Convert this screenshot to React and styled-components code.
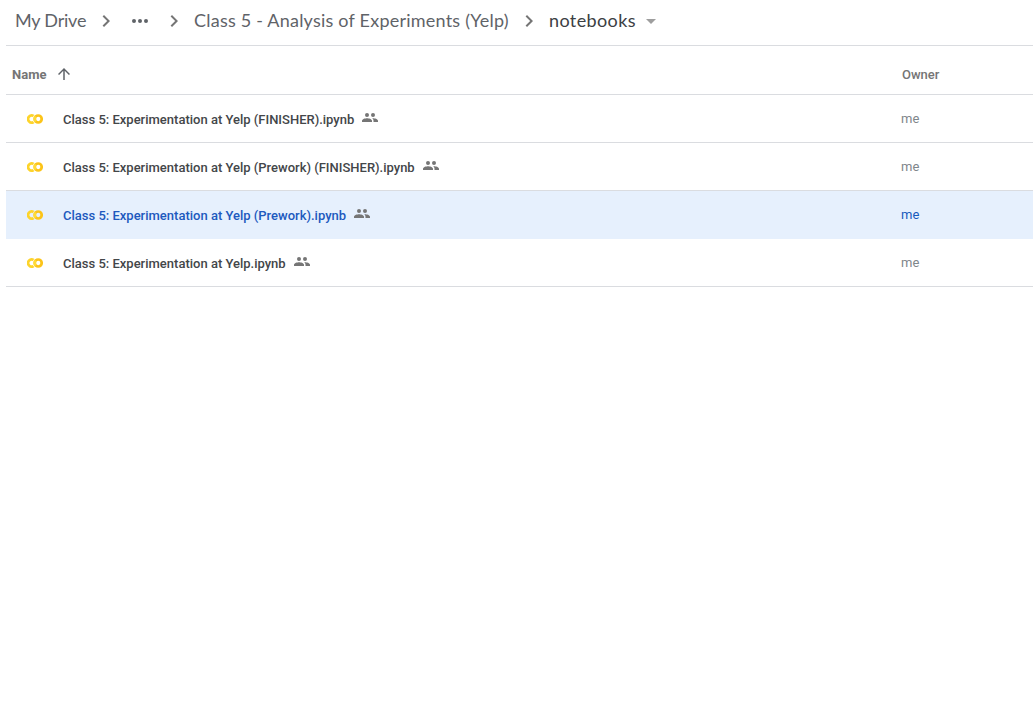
import React from "react";
import styled, { createGlobalStyle } from "styled-components";

const GlobalStyle = createGlobalStyle`
  * { box-sizing: border-box; }
  body { margin: 0; background: #fff; font-family: Roboto, "Liberation Sans", sans-serif; }
`;

const Page = styled.main`
  padding-left: 6px;
  min-height: 704px;
  overflow: hidden;
`;

const Breadcrumbs = styled.nav`
  display: flex;
  align-items: center;
  height: 46px;
  padding: 0 0 4px 9px;
  border-bottom: 1px solid #dadce0;
`;

const Crumb = styled.span`
  flex: none;
  width: ${(p) => p.$width}px;
  padding-bottom: 2px;
  color: ${(p) => (p.$current ? "#3c4043" : "#5f6368")};
  font: 400 18px/24px "Google Sans", Lato, sans-serif;
  letter-spacing: ${(p) => p.$spacing || 0}px;
  white-space: nowrap;
`;

const Icon = styled.svg`
  display: block;
  flex: none;
  width: ${(p) => p.$size}px;
  height: ${(p) => p.$size}px;
  fill: ${(p) => p.$color || "#5f6368"};
`;

const Separator = styled.span`
  display: flex;
  justify-content: center;
  flex: none;
  width: 24px;
  margin: 0 ${(p) => p.$after}px 0 ${(p) => p.$before}px;
`;

const HeaderRow = styled.div`
  display: flex;
  align-items: center;
  height: 49px;
  padding: 16px 0 7px 6px;
  border-bottom: 1px solid #dadce0;
  color: #757575;
  font-size: 13px;
  line-height: 18px;
`;

const NameHeader = styled.div`
  display: flex;
  align-items: center;
  gap: 9px;
  width: 890px;
  font-weight: 700;
`;

const SortIcon = styled(Icon)`
  margin: -2px 0 0;
`;

const OwnerHeader = styled.div`
  font-weight: 500;
`;

const Row = styled.div`
  display: flex;
  align-items: center;
  height: 48px;
  padding-left: 21px;
  border-bottom: 1px solid ${(p) => (p.$selected ? "#e6f0fd" : "#dadce0")};
  background: ${(p) => (p.$selected ? "#e6f0fd" : "#fff")};
  color: ${(p) => (p.$selected ? "#2059be" : "#434649")};
  font-size: 13px;
  line-height: 18px;
`;

const ColabIcon = styled.svg`
  display: block;
  flex: none;
  width: 16px;
  height: 16px;
  margin-right: 20px;
`;

const NameCell = styled.div`
  display: flex;
  align-items: center;
  gap: 8px;
  width: 838px;
  font-weight: 500;
  padding-top: 2px;
`;

const SharedIcon = styled(Icon)`
  margin-bottom: 4px;
`;

const OwnerCell = styled.div`
  color: ${(p) => (p.$selected ? "#185abc" : "#80868b")};
`;

function Chevron({ before, after }) {
  return (
    <Separator $before={before} $after={after}>
      <Icon $size={24} $color="#757575" viewBox="0 0 24 24">
        <path d="M8.59 16.59 13.17 12 8.59 7.41 10 6l6 6-6 6z" />
      </Icon>
    </Separator>
  );
}

function Colab() {
  return (
    <ColabIcon viewBox="0 0 16 16" fill="none" strokeWidth="2.7">
      <path d="M6.6 4.9A3.6 3.6 0 1 0 6.6 11.1" stroke="#fdd42b" />
      <circle cx="11.2" cy="8" r="3.5" stroke="#fcc419" />
      <path d="M8.7 10.45A3.5 3.5 0 0 1 8.7 5.55" stroke="#ffdb38" />
    </ColabIcon>
  );
}

function Shared() {
  return (
    <SharedIcon $size={16} $color="#757575" viewBox="0 0 16 16">
      <path d="M5 7a2 2 0 1 0 0-4 2 2 0 0 0 0 4zM11 7a2 2 0 1 0 0-4 2 2 0 0 0 0 4zM5 8.2c-1.67 0-5 .83-5 2.5V12h10v-1.3c0-1.67-3.33-2.5-5-2.5zM11 8.2c-.25 0-.54.02-.84.06.79.6 1.34 1.4 1.34 2.44V12H16v-1.3c0-1.67-3.33-2.5-5-2.5z" />
    </SharedIcon>
  );
}

const files = [
  { name: "Class 5: Experimentation at Yelp (FINISHER).ipynb", owner: "me" },
  { name: "Class 5: Experimentation at Yelp (Prework) (FINISHER).ipynb", owner: "me" },
  { name: "Class 5: Experimentation at Yelp (Prework).ipynb", owner: "me", selected: true },
  { name: "Class 5: Experimentation at Yelp.ipynb", owner: "me" },
];

export default function App() {
  return (
    <Page>
      <GlobalStyle />
      <Breadcrumbs>
        <Crumb $width={71} $spacing={-0.2}>My Drive</Crumb>
        <Chevron before={8} after={10} />
        <Icon $size={24} viewBox="0 0 24 24">
          <path d="M6 10a2 2 0 1 0 0 4 2 2 0 0 0 0-4zm12 0a2 2 0 1 0 0 4 2 2 0 0 0 0-4zm-6 0a2 2 0 1 0 0 4 2 2 0 0 0 0-4z" />
        </Icon>
        <Chevron before={10} after={8} />
        <Crumb $width={315} $spacing={0.22}>Class 5 - Analysis of Experiments (Yelp)</Crumb>
        <Chevron before={8} after={8} />
        <Crumb $width={87} $spacing={0.38} $current>notebooks</Crumb>
        <Separator $before={3} $after={0}>
          <Icon $size={24} $color="#9e9e9e" viewBox="0 0 24 24">
            <path d="m7 10 5 5 5-5z" />
          </Icon>
        </Separator>
      </Breadcrumbs>
      <HeaderRow>
        <NameHeader>
          Name
          <SortIcon $size={18} viewBox="0 0 24 24">
            <path d="m4 12 1.41 1.41L11 7.83V20h2V7.83l5.58 5.59L20 12l-8-8z" />
          </SortIcon>
        </NameHeader>
        <OwnerHeader>Owner</OwnerHeader>
      </HeaderRow>
      {files.map((file) => (
        <Row key={file.name} $selected={file.selected}>
          <Colab />
          <NameCell>
            {file.name}
            <Shared />
          </NameCell>
          <OwnerCell $selected={file.selected}>{file.owner}</OwnerCell>
        </Row>
      ))}
    </Page>
  );
}
